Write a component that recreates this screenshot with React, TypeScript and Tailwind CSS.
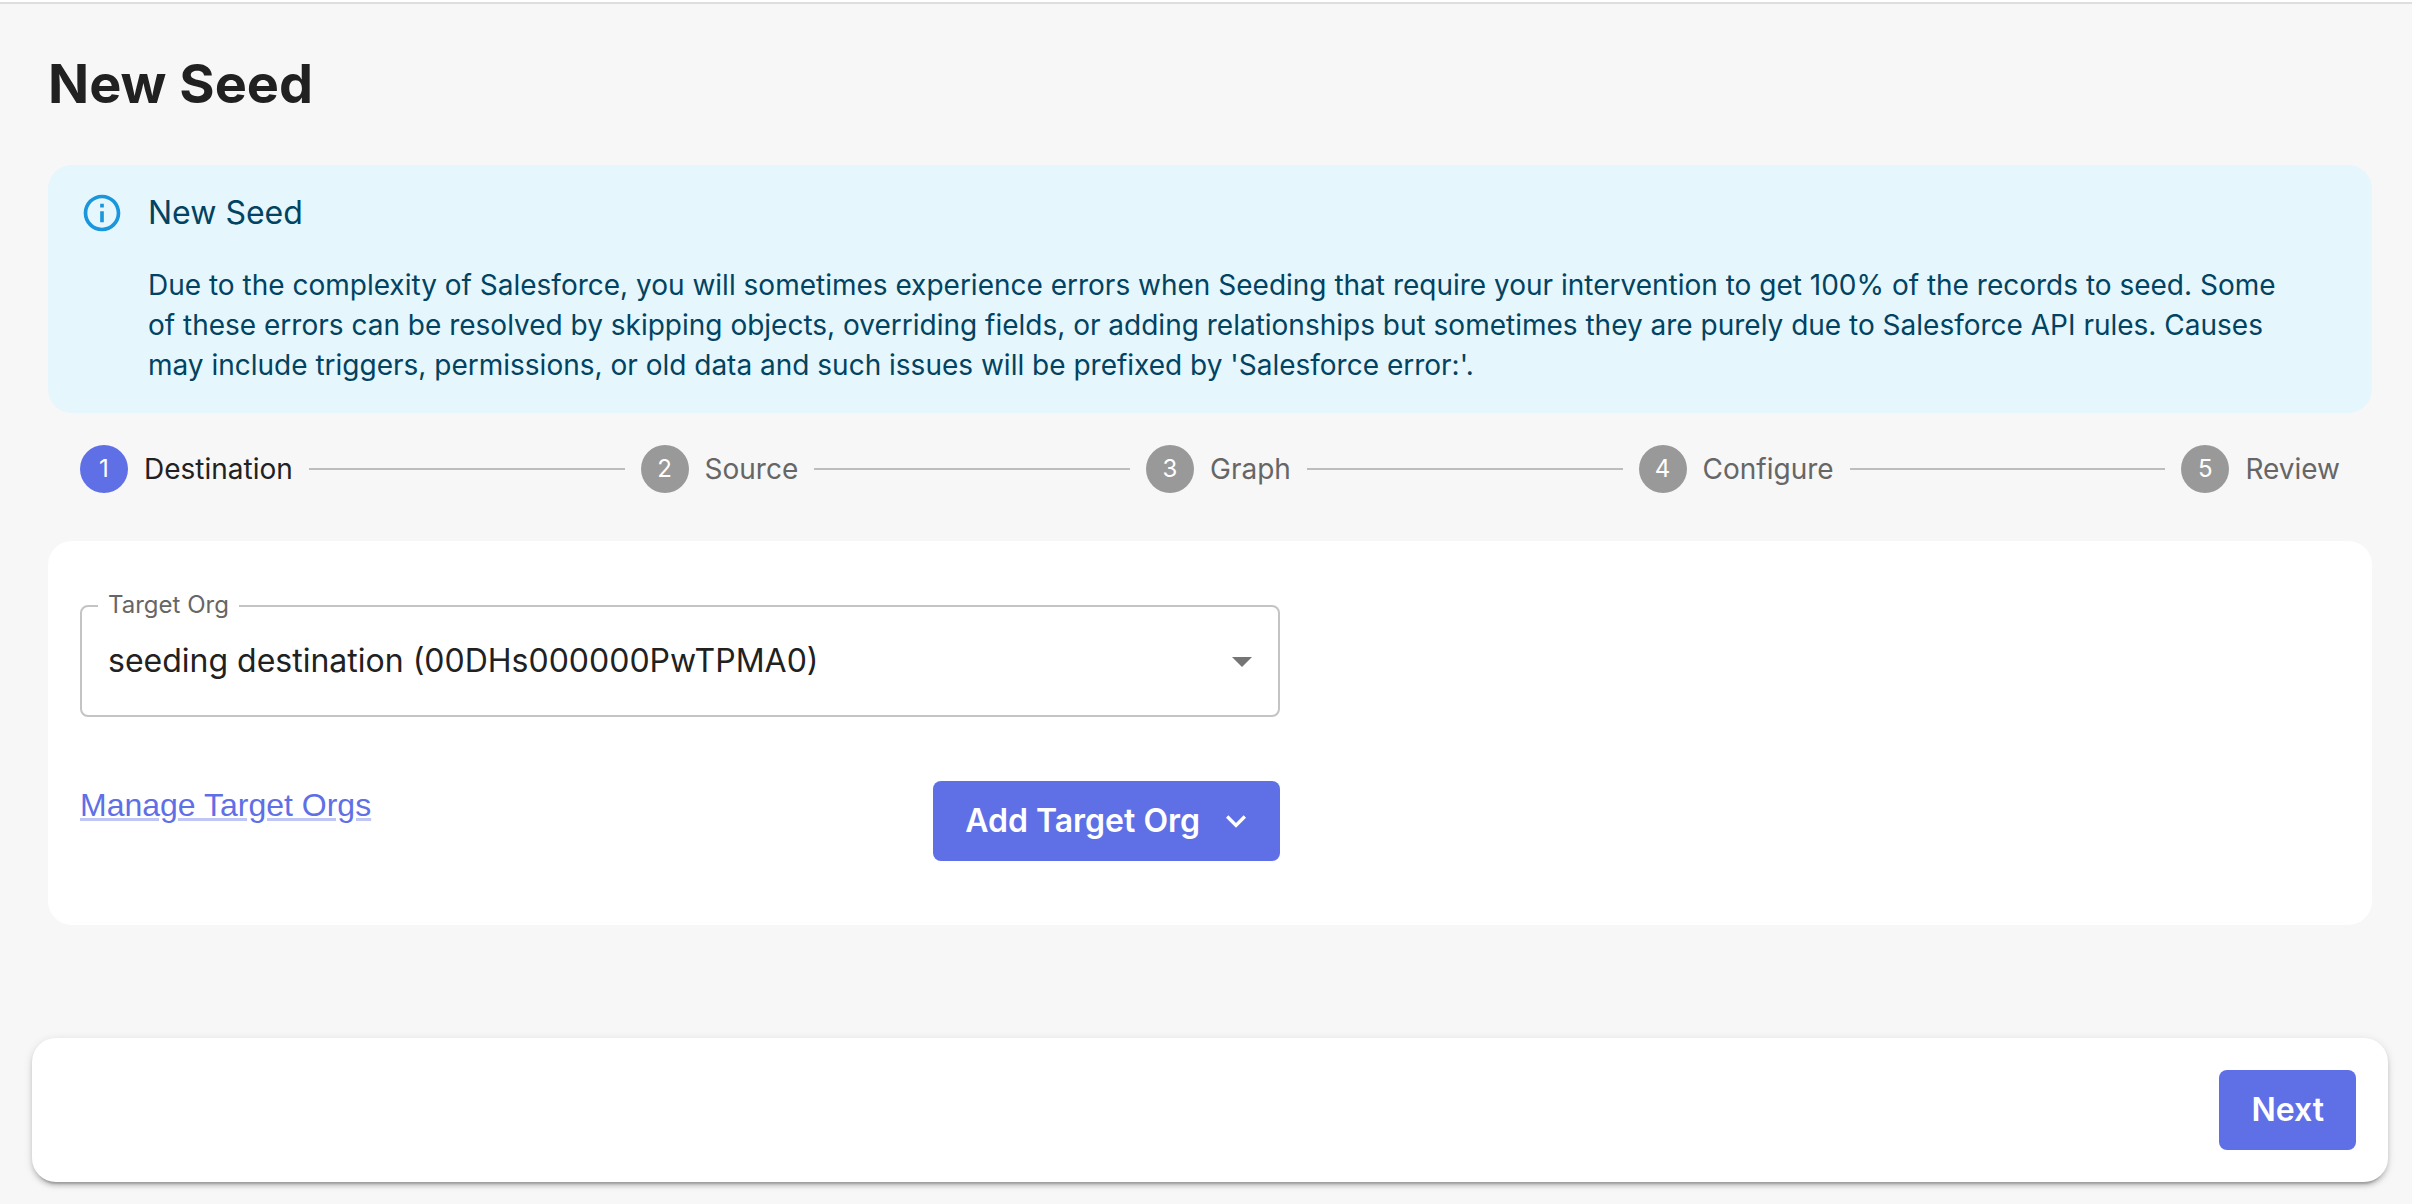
import { Fragment } from "react";

const steps = ["Destination", "Source", "Graph", "Configure", "Review"];

function InfoIcon() {
  return (
    <svg viewBox="0 0 24 24" className="size-11 shrink-0 fill-[#1a96dc]" aria-hidden="true">
      <path d="M11 7h2v2h-2zm0 4h2v6h-2zm1-9C6.48 2 2 6.48 2 12s4.48 10 10 10 10-4.48 10-10S17.52 2 12 2zm0 18c-4.41 0-8-3.59-8-8s3.59-8 8-8 8 3.59 8 8-3.59 8-8 8z" />
    </svg>
  );
}

function Notice() {
  return (
    <section className="flex gap-6 rounded-3xl bg-[#e5f6fd] px-8 pt-6 pb-7 text-[#014361]">
      <div className="pt-0.5">
        <InfoIcon />
      </div>
      <div>
        <h2 className="text-[32px] leading-[48px]">New Seed</h2>
        <p className="mt-7 pr-10 text-[28px] leading-10">
          Due to the complexity of Salesforce, you will sometimes experience errors when Seeding that require your
          intervention to get 100% of the records to seed. Some of these errors can be resolved by skipping objects,
          overriding fields, or adding relationships but sometimes they are purely due to Salesforce API rules. Causes
          may include triggers, permissions, or old data and such issues will be prefixed by 'Salesforce error:'.
        </p>
      </div>
    </section>
  );
}

function Stepper() {
  return (
    <ol className="mt-8 flex items-center gap-4 px-8">
      {steps.map((label, i) => (
        <Fragment key={label}>
          {i > 0 && <li aria-hidden="true" className="h-0.5 flex-1 bg-[#bdbdbd]" />}
          <li className="flex items-center gap-4" aria-current={i === 0 ? "step" : undefined}>
            <span
              className={
                i === 0
                  ? "flex size-12 items-center justify-center rounded-full bg-[#5f6fe6] text-2xl text-white"
                  : "flex size-12 items-center justify-center rounded-full bg-[#999999] text-2xl text-white"
              }
            >
              {i + 1}
            </span>
            <span className={i === 0 ? "text-[28px] leading-10 text-[#212121]" : "text-[28px] leading-10 text-[#666666]"}>
              {label}
            </span>
          </li>
        </Fragment>
      ))}
    </ol>
  );
}

export default function App() {
  return (
    <div className="flex min-h-screen flex-col bg-[#f7f7f7] font-['Inter',sans-serif] text-[#212121] [font-optical-sizing:none]">
      <div className="h-1 border-b-2 border-[#dedede] bg-white" />
      <main className="pr-10 pl-12">
        <h1 className="pt-12 pb-[49px] text-[54px] leading-[64px] font-bold">New Seed</h1>
        <Notice />
        <Stepper />
        <section className="mt-12 rounded-3xl bg-white px-8 py-16">
          <div className="max-w-[1200px]">
            <div className="relative">
              <label htmlFor="target-org" className="absolute -top-[18px] left-[18px] bg-white px-2.5 text-2xl leading-9 text-[#666666]">
                Target Org
              </label>
              <select
                id="target-org"
                className="h-28 w-full appearance-none rounded-lg border-2 border-[#c4c4c4] bg-transparent pr-16 pl-[26px] text-[32px]"
              >
                <option>seeding destination (00DHs000000PwTPMA0)</option>
              </select>
              <svg viewBox="0 0 20 10" className="pointer-events-none absolute top-[52px] right-7 h-2.5 w-5 fill-[#757575]" aria-hidden="true">
                <path d="M0 0h20L10 10z" />
              </svg>
            </div>
            <div className="mt-16 flex items-start justify-between">
              <a
                href="#manage"
                className="font-['Liberation_Sans',sans-serif] text-[32px] leading-[48px] text-[#5f6fe6] underline decoration-[#5f6fe6]/40 decoration-[3px] underline-offset-2"
              >
                Manage Target Orgs
              </a>
              <button type="button" className="flex h-20 items-center gap-4 rounded-lg bg-[#5f6fe6] pr-6 pl-8 text-[32px] font-semibold text-white">
                Add Target Org
                <svg viewBox="0 0 24 24" className="size-10 fill-white" aria-hidden="true">
                  <path d="M7.41 8.59 12 13.17l4.59-4.58L18 10l-6 6-6-6z" />
                </svg>
              </button>
            </div>
          </div>
        </section>
      </main>
      <footer className="mr-6 mb-[22px] ml-8 mt-auto flex justify-end rounded-3xl bg-white p-8 shadow-[0_6px_2px_-4px_rgba(0,0,0,0.2),0_4px_4px_0_rgba(0,0,0,0.14),0_2px_10px_0_rgba(0,0,0,0.12)]">
        <button type="button" className="h-20 rounded-lg bg-[#5f6fe6] px-8 text-[32px] font-semibold text-white">
          Next
        </button>
      </footer>
    </div>
  );
}
